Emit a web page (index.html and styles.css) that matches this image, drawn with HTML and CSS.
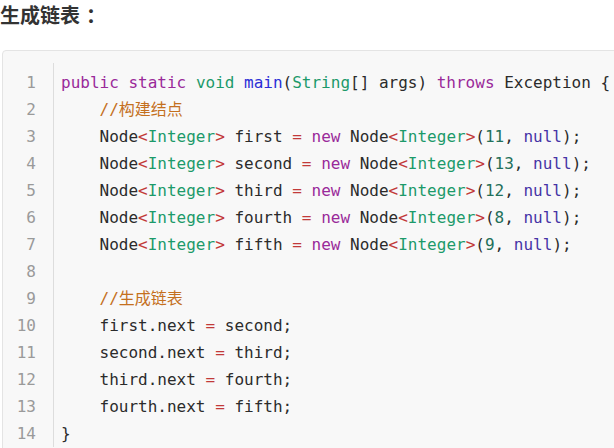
FILE: index.html
```html
<!DOCTYPE html>
<html lang="zh">
<head>
<meta charset="utf-8">
<link rel="stylesheet" href="styles.css">
</head>
<body>
<div class="page">
  <div class="title">生成链表<span class="colon">：</span></div>
  <div class="code-block">
    <div class="gutter">
      <div class="ln">1</div><div class="ln">2</div><div class="ln">3</div><div class="ln">4</div><div class="ln">5</div><div class="ln">6</div><div class="ln">7</div><div class="ln">8</div><div class="ln">9</div><div class="ln">10</div><div class="ln">11</div><div class="ln">12</div><div class="ln">13</div><div class="ln">14</div>
    </div>
    <div class="code">
<div class="line"><span class="kw">public</span> <span class="kw">static</span> <span class="ty">void</span> <span class="fn">main</span>(<span class="ty">String</span>[] args) <span class="kw">throws</span> Exception {</div>
<div class="line">    <span class="cm">//构建结点</span></div>
<div class="line">    Node<span class="op">&lt;</span><span class="ty">Integer</span><span class="op">&gt;</span> first <span class="op">=</span> <span class="kw">new</span> Node<span class="op">&lt;</span><span class="ty">Integer</span><span class="op">&gt;</span>(<span class="num">11</span>, <span class="lit">null</span>);</div>
<div class="line">    Node<span class="op">&lt;</span><span class="ty">Integer</span><span class="op">&gt;</span> second <span class="op">=</span> <span class="kw">new</span> Node<span class="op">&lt;</span><span class="ty">Integer</span><span class="op">&gt;</span>(<span class="num">13</span>, <span class="lit">null</span>);</div>
<div class="line">    Node<span class="op">&lt;</span><span class="ty">Integer</span><span class="op">&gt;</span> third <span class="op">=</span> <span class="kw">new</span> Node<span class="op">&lt;</span><span class="ty">Integer</span><span class="op">&gt;</span>(<span class="num">12</span>, <span class="lit">null</span>);</div>
<div class="line">    Node<span class="op">&lt;</span><span class="ty">Integer</span><span class="op">&gt;</span> fourth <span class="op">=</span> <span class="kw">new</span> Node<span class="op">&lt;</span><span class="ty">Integer</span><span class="op">&gt;</span>(<span class="num">8</span>, <span class="lit">null</span>);</div>
<div class="line">    Node<span class="op">&lt;</span><span class="ty">Integer</span><span class="op">&gt;</span> fifth <span class="op">=</span> <span class="kw">new</span> Node<span class="op">&lt;</span><span class="ty">Integer</span><span class="op">&gt;</span>(<span class="num">9</span>, <span class="lit">null</span>);</div>
<div class="line"> </div>
<div class="line">    <span class="cm">//生成链表</span></div>
<div class="line">    first.next <span class="op">=</span> second;</div>
<div class="line">    second.next <span class="op">=</span> third;</div>
<div class="line">    third.next <span class="op">=</span> fourth;</div>
<div class="line">    fourth.next <span class="op">=</span> fifth;</div>
<div class="line">}</div>
    </div>
  </div>
</div>
</body>
</html>
```

FILE: styles.css
```css
html, body {
  margin: 0;
  padding: 0;
  background: #ffffff;
  overflow: hidden;
}

.page {
  width: 660px;
}

.title {
  font-family: "Noto Sans CJK SC", "Noto Sans", sans-serif;
  font-size: 20px;
  font-weight: 700;
  line-height: 30px;
  color: #333333;
  margin: 0 0 20px 0;
}

.colon {
  margin-left: 6px;
}

.code-block {
  margin-left: 2px;
  border: 1px solid #e4e4e4;
  border-radius: 4px;
  background: #f8f8f8;
  padding-top: 12px;
  padding-bottom: 20px;
  display: flex;
  font-family: "DejaVu Sans Mono", "Noto Sans CJK SC", monospace;
  font-size: 16px;
  line-height: 27px;
}

.gutter {
  width: 51px;
  box-sizing: border-box;
  padding: 6px 17px 0 0;
  border-right: 1px solid #dddddd;
  text-align: right;
  color: #9a9a9a;
}

.code {
  padding: 6px 0 0 7px;
  color: #2b2b2b;
}

.line {
  white-space: pre;
  height: 27px;
}

.kw { color: #9a2a9a; }
.ty { color: #1c9a6a; }
.fn { color: #2b2fd6; }
.op { color: #c23a3a; }
.num { color: #23705a; }
.lit { color: #4634a6; }
.cm { color: #c4701e; }
```
